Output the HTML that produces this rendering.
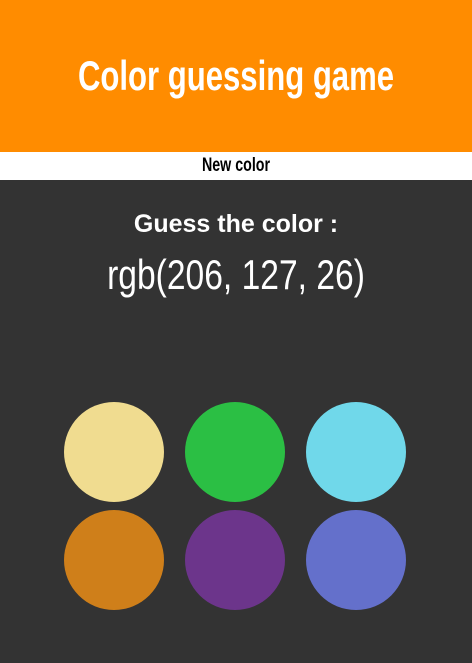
<!DOCTYPE html>
<html><head><meta charset="utf-8"><style>
html,body{margin:0;padding:0;width:472px;height:663px;background:#333;overflow:hidden;font-family:"Liberation Sans",sans-serif}
.h{position:absolute;left:0;top:0;width:472px;height:152px;background:#ff8c00}
.t{position:absolute;left:0;width:472px;text-align:center;white-space:nowrap}
.bar{position:absolute;left:0;top:152px;width:472px;height:28px;background:#fff}
.c{position:absolute;width:100px;height:100px;border-radius:50%}
</style></head><body>
<div class="h"></div>
<div class="t" style="top:52px;font-size:42px;font-weight:bold;color:#fff;transform:scaleX(0.74)">Color guessing game</div>
<div class="bar"></div>
<div class="t" style="top:155px;font-size:19px;font-weight:bold;color:#000;transform:scaleX(0.75)">New color</div>
<div class="t" style="top:210px;font-size:25px;font-weight:bold;color:#fff">Guess the color :</div>
<div class="t" style="top:251px;font-size:42px;color:#fff;transform:scaleX(0.8)">rgb(206, 127, 26)</div>
<div class="c" style="left:64px;top:402px;background:#f0dc90"></div>
<div class="c" style="left:185px;top:402px;background:#2bbf44"></div>
<div class="c" style="left:306px;top:402px;background:#70d8ea"></div>
<div class="c" style="left:64px;top:510px;background:#cf7f1a"></div>
<div class="c" style="left:185px;top:510px;background:#6c358b"></div>
<div class="c" style="left:306px;top:510px;background:#6470cb"></div>
</body></html>
